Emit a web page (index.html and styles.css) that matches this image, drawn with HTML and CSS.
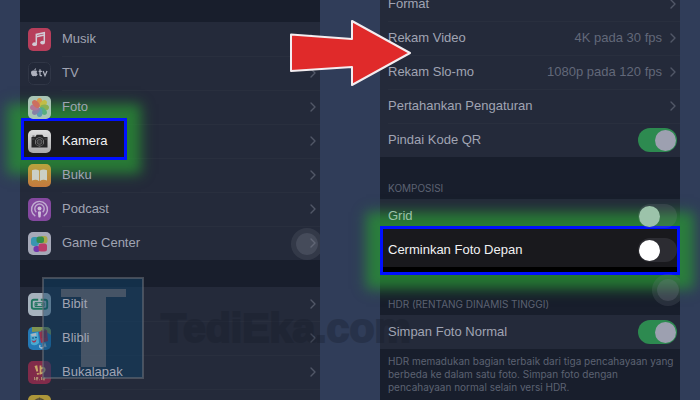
FILE: index.html
```html
<!DOCTYPE html>
<html lang="id">
<head>
<meta charset="utf-8">
<meta name="viewport" content="width=device-width, initial-scale=1">
<title>Cerminkan Foto Depan</title>
<link rel="stylesheet" href="styles.css">
</head>
<body>
<svg class="sprite" aria-hidden="true">
  <symbol id="chevron" viewBox="0 0 6 10"><path d="M1 1l4 4-4 4" fill="none" stroke="currentColor" stroke-width="1.4" stroke-linecap="round" stroke-linejoin="round"/></symbol>
</svg>
<main class="guide">
  <section class="screen" aria-label="Pengaturan">
    <ul class="group group-apps">
      <li class="row"><a class="link" href="#musik">
        <svg class="icon" viewBox="0 0 23 23"><rect width="23" height="23" rx="5" fill="#b73e5b"/><path d="M8.3 15.8V6.400l8-1.700v9.500M8.300 8.800l8-1.700" fill="none" stroke="#d2cbd6" stroke-width="1.500"/><ellipse cx="6.600" cy="16.200" rx="2.400" ry="1.900" fill="#d2cbd6"/><ellipse cx="14.600" cy="14.600" rx="2.400" ry="1.900" fill="#d2cbd6"/></svg>
        <span class="label">Musik</span><svg class="chevron"><use href="#chevron"/></svg></a></li>
      <li class="row"><a class="link" href="#tv">
        <svg class="icon" viewBox="0 0 23 23"><rect x=".5" y=".5" width="22" height="22" rx="5" fill="#222838" stroke="#303646"/><path d="M6.400 8.800c1-.5 2.200-.5 3 .3-1.100.9-1 2.400.3 3-.5 1.500-1.400 2.500-2.300 2.200-.8-.3-1-.3-1.800 0C4.100 14.500 3 12.200 3 10.800c0-1.800 1.600-2.700 3.400-2zM6.300 8.300c0-1.100.8-2 1.800-2.100 0 1.100-.8 2-1.800 2.100z" fill="#aeb1be"/><path d="M12 7.300v5.300q0 1.400 1.900 1M10.600 9.300h3.300M15.100 9.100l1.900 4.600 2-4.600" fill="none" stroke="#aeb1be" stroke-width="1.300"/></svg>
        <span class="label">TV</span><svg class="chevron"><use href="#chevron"/></svg></a></li>
      <li class="row"><a class="link" href="#foto">
        <svg class="icon" viewBox="0 0 23 23"><rect width="23" height="23" rx="5" fill="#a9c5b4"/><g opacity=".9"><ellipse cx="11.500" cy="6.500" rx="2.900" ry="4.500" fill="#dc963f"/><ellipse cx="11.500" cy="6.500" rx="2.900" ry="4.500" fill="#c5bd3c" transform="rotate(45 11.500 11.500)"/><ellipse cx="11.500" cy="6.500" rx="2.900" ry="4.500" fill="#87ad49" transform="rotate(90 11.500 11.500)"/><ellipse cx="11.500" cy="6.500" rx="2.900" ry="4.500" fill="#4fad79" transform="rotate(135 11.500 11.500)"/><ellipse cx="11.500" cy="6.500" rx="2.900" ry="4.500" fill="#5596b4" transform="rotate(180 11.500 11.500)"/><ellipse cx="11.500" cy="6.500" rx="2.900" ry="4.500" fill="#8379a6" transform="rotate(225 11.500 11.500)"/><ellipse cx="11.500" cy="6.500" rx="2.900" ry="4.500" fill="#b26f95" transform="rotate(270 11.500 11.500)"/><ellipse cx="11.500" cy="6.500" rx="2.900" ry="4.500" fill="#d26656" transform="rotate(315 11.500 11.500)"/></g></svg>
        <span class="label">Foto</span><svg class="chevron"><use href="#chevron"/></svg></a></li>
      <li class="row row-marked"><span class="marker marker-camera"></span><a class="link" href="#kamera">
        <svg class="icon" viewBox="0 0 23 23"><defs><linearGradient id="cam" x2="0" y2="1"><stop stop-color="#dededf"/><stop offset="1" stop-color="#aaaaac"/></linearGradient></defs><rect width="23" height="23" rx="5" fill="url(#cam)"/><path d="M3.500 7h3.700l1.500-2.200h5.600L15.800 7h3.700v10.500h-16z" fill="#252527"/><path d="M4.400 5.700h2.200v.8H4.400z" fill="#252527"/><circle cx="11.500" cy="11.900" r="4.500" fill="#a5a5a7"/><circle cx="11.500" cy="11.900" r="3.900" fill="#242426"/><circle cx="11.500" cy="11.900" r="2.500" fill="#3b3b3e" stroke="#777779" stroke-width=".7"/><path d="M3.500 9h3M16.500 9h3" stroke="#666669" stroke-width=".7"/></svg>
        <span class="label">Kamera</span><svg class="chevron"><use href="#chevron"/></svg></a></li>
      <li class="row"><a class="link" href="#buku">
        <svg class="icon" viewBox="0 0 23 23"><defs><linearGradient id="book" x2="0" y2="1"><stop stop-color="#b9a43d"/><stop offset="1" stop-color="#c2793e"/></linearGradient></defs><rect width="23" height="23" rx="5" fill="url(#book)"/><path d="M4 6.200q4-1.700 7.100.4v10.300q-3.100-1.900-7.100-.4zM19 6.200q-4-1.700-7.100.4v10.300q3.100-1.900 7.100-.4z" fill="#cbcfc6"/></svg>
        <span class="label">Buku</span><svg class="chevron"><use href="#chevron"/></svg></a></li>
      <li class="row"><a class="link" href="#podcast">
        <svg class="icon" viewBox="0 0 23 23"><rect width="23" height="23" rx="5" fill="#84489f"/><g fill="none" stroke="#c0acd0" stroke-width="1.400"><path d="M7.300 18.200a8 8 0 1 1 8.400 0M8.300 14.200a4.700 4.700 0 1 1 6.400 0"/></g><circle cx="11.500" cy="10.500" r="2" fill="#d0c0dc"/><path d="M9.900 13.700q1.600-1 3.200 0l-.5 5.300q-1.100 1.200-2.200 0z" fill="#d0c0dc"/></svg>
        <span class="label">Podcast</span><svg class="chevron"><use href="#chevron"/></svg></a></li>
      <li class="row"><a class="link" href="#game-center">
        <svg class="icon" viewBox="0 0 23 23"><rect width="23" height="23" rx="5" fill="#a6a9b8"/><rect x="12" y="4" width="7.500" height="7.500" rx="3" fill="#aba849"/><rect x="3" y="5" width="8" height="9" rx="3" fill="#3996b1"/><rect x="8.500" y="4.500" width="7.500" height="6.500" rx="2.500" fill="#338c4b"/><rect x="5.500" y="14" width="6.500" height="6" rx="2.700" fill="#7437ac"/><rect x="10.500" y="11.500" width="8.500" height="8" rx="2.500" fill="#b93d69"/></svg>
        <span class="label">Game Center</span><svg class="chevron"><use href="#chevron"/></svg></a><span class="touch touch-left"></span></li>
    </ul>
    <ul class="group">
      <li class="row"><a class="link" href="#bibit">
        <svg class="icon" viewBox="0 0 23 23"><rect width="23" height="23" rx="5" fill="#a6b2bd"/><path d="M10.200 6.700H5.800q-2 0-2 2v5q0 2 2 2h11.400q2 0 2-2v-5q0-2-2-2h-4.400" fill="none" stroke="#20755f" stroke-width="1.900"/><path d="M7 9.700h9v3.800H7z" fill="none" stroke="#20755f" stroke-width="1"/><circle cx="8.500" cy="11.500" r="1.200" fill="#20755f"/><circle cx="14.500" cy="11.500" r="1.200" fill="#20755f"/></svg>
        <span class="label">Bibit</span><svg class="chevron"><use href="#chevron"/></svg></a></li>
      <li class="row"><a class="link" href="#blibli">
        <svg class="icon" viewBox="0 0 23 23"><rect width="23" height="23" rx="5" fill="#2478b4"/><path d="M4 0h14q5 0 5 5v3L17 4 4 5z" fill="#7f9250"/><path d="M11 5l8-2 1 11-7 2z" fill="#9a304d"/><path d="M14 3v8M17 2v9" stroke="#653b54"/><path d="M2 7l8-2 1 11q-4 4-8 1z" fill="#4aa9d0"/><path d="M3 7l5-1 .5 3-5 .5z" fill="#a8b4c1"/><path d="M3.500 13q3 2.500 5-1-.5 5-4 3z" fill="#a5344f"/><circle cx="5" cy="11" r=".8" fill="#173b6b"/><circle cx="8" cy="10.500" r=".8" fill="#173b6b"/><path d="M12 18q-1 3 1.500 3t3.500-4l1 3" fill="none" stroke="#a8c3d8" stroke-width="1.300"/></svg>
        <span class="label">Blibli</span><svg class="chevron"><use href="#chevron"/></svg></a></li>
      <li class="row"><a class="link" href="#bukalapak">
        <svg class="icon" viewBox="0 0 23 23"><rect width="23" height="23" rx="5" fill="#812b4a"/><path d="M6.500 5l2.700-.7 1 6-1.700.5zM8.700 12.300l2-.5.300 1.600-1.900.4z" fill="#c9a869"/><path d="M12.500 4.500v8M12.500 8q3.500-2.500 4.200.3.300 3.200-5.200 4.500" fill="none" stroke="#c9a869" stroke-width="1.800"/><path d="M6.500 16v3M8 16.500h2v1H8v1.300h2M11.200 18.800h.8M13.500 16v3M15 16.500h2v1h-2v1.300h2" fill="none" stroke="#b7a279" stroke-width=".8"/></svg>
        <span class="label">Bukalapak</span><svg class="chevron"><use href="#chevron"/></svg></a></li>
      <li class="row"><a class="link" href="#lainnya" aria-label="Aplikasi lainnya">
        <svg class="icon" viewBox="0 0 23 23"><rect width="23" height="23" rx="5" fill="#ad963a"/><path d="M7 5.500q4.500-3.500 9 0M11.500 2.500V6" fill="none" stroke="#554d37" stroke-width="1.400"/></svg></a></li>
    </ul>
  </section>

  <section class="screen screen-camera" aria-label="Kamera">
    <ul class="group group-record">
      <li class="row"><a class="link" href="#format"><span class="label">Format</span><svg class="chevron"><use href="#chevron"/></svg></a></li>
      <li class="row"><a class="link" href="#video"><span class="label">Rekam Video</span><span class="value">4K pada 30 fps</span><svg class="chevron"><use href="#chevron"/></svg></a></li>
      <li class="row"><a class="link" href="#slomo"><span class="label">Rekam Slo-mo</span><span class="value">1080p pada 120 fps</span><svg class="chevron"><use href="#chevron"/></svg></a></li>
      <li class="row"><a class="link" href="#pertahankan"><span class="label">Pertahankan Pengaturan</span><svg class="chevron"><use href="#chevron"/></svg></a></li>
      <li class="row"><div class="link"><label class="label" for="qr">Pindai Kode QR</label><input class="switch" type="checkbox" role="switch" id="qr" checked></div></li>
    </ul>
    <h2 class="heading">KOMPOSISI</h2>
    <ul class="group">
      <li class="row"><div class="link"><label class="label label-grid" for="grid">Grid</label><input class="switch" type="checkbox" role="switch" id="grid"></div></li>
      <li class="row row-marked"><span class="marker marker-mirror"></span><div class="link"><label class="label" for="mirror">Cerminkan Foto Depan</label><input class="switch" type="checkbox" role="switch" id="mirror"></div></li>
    </ul>
    <div class="heading-line"><h2 class="heading heading-hdr">HDR (RENTANG DINAMIS TINGGI)</h2><span class="touch touch-right"></span></div>
    <ul class="group">
      <li class="row"><div class="link"><label class="label" for="hdr">Simpan Foto Normal</label><input class="switch" type="checkbox" role="switch" id="hdr" checked></div></li>
    </ul>
    <p class="note">HDR memadukan bagian terbaik dari tiga pencahayaan yang berbeda ke dalam satu foto. Simpan foto dengan pencahayaan normal selain versi HDR.</p>
  </section>

  <div class="watermark" aria-hidden="true">
    <svg class="badge" viewBox="0 0 102 102"><rect x="1" y="1" width="100" height="100" fill="#0d4066" fill-opacity=".5" stroke="#6b7078" stroke-opacity=".55" stroke-width="2"/><path d="M19 12h65v8H64v70H39V20H19z" fill="#777780" fill-opacity=".48"/></svg>
    <span class="brand">TediEka.com</span>
  </div>
  <svg class="arrow" viewBox="0 0 122 68" aria-hidden="true"><path d="M2 15.500L63 20V2l58 32-58 32V48L2 52z" fill="#e02a2a" stroke="#f3edf0" stroke-width="2" stroke-linejoin="round"/></svg>
</main>
</body>
</html>
```
FILE: styles.css
```css
* { box-sizing: border-box; }

body {
  margin: 0;
  background: #303d59;
  color: #a0a4b3;
  font: 13px/16px "Liberation Sans", Arial, sans-serif;
}

.sprite { position: absolute; width: 0; height: 0; }

.guide {
  position: relative;
  display: grid;
  grid-template-columns: 1fr 1fr;
  gap: 60px;
  height: 100vh;
  padding: 0 20px;
  overflow: hidden;
}

.screen { background: #181e2c; }

.group {
  margin: 0;
  padding: 0;
  list-style: none;
  background: #242a3a;
}

.group-apps { margin: 22px 0 27px; }
.group-record { margin-top: -13px; }

.row { position: relative; height: 34px; }

.row + .row::before {
  content: "";
  position: absolute;
  top: 0;
  right: 0;
  left: 42px;
  height: 1px;
  background: #292f3e;
}

.screen-camera .row + .row::before { left: 8px; }

.link {
  display: flex;
  align-items: center;
  height: 100%;
  padding: 0 4px 0 8px;
  color: inherit;
  text-decoration: none;
}

/* Stacking: marker glow, icons and controls, watermark, labels, arrow. */
.icon, .chevron, .switch, .value { position: relative; z-index: 2; }
.label { position: relative; z-index: 3; }

.icon { width: 23px; height: 23px; margin-right: 11px; }
.label { flex: 1; }
.value { color: #626879; }

.chevron {
  width: 6px;
  height: 10px;
  margin-left: 8px;
  color: #515767;
}

.row-marked .label { color: #f1f1f3; }
.label-grid { color: #9cc3aa; }

.marker {
  position: absolute;
  z-index: 1;
  border: 3px solid #0010ff;
  background: #19191d;
  box-shadow: 0 0 12px 14px rgba(41, 145, 52, .78);
}

.marker-camera { top: -6px; bottom: -2px; left: 1px; width: 106px; }

.marker-mirror {
  top: -7px;
  right: 0;
  bottom: -8px;
  left: 0;
  background: linear-gradient(#19191d 38px, #000 38px);
}

.switch {
  appearance: none;
  display: flex;
  align-items: center;
  width: 39px;
  height: 24px;
  margin: 0 -1px 0 0;
  padding: 1px;
  border-radius: 12px;
  background: rgba(150, 150, 160, .16);
}

.switch::before {
  content: "";
  width: 21px;
  height: 21px;
  border-radius: 50%;
  background: #9da0b0;
}

.switch:checked { justify-content: flex-end; background: #2d8a50; }
#grid::before { background: #9cc3aa; }
#mirror::before { background: #fff; }

.heading,
.note {
  margin: 0;
  color: #5c6272;
  font-family: Inter, "Liberation Sans", sans-serif;
  font-size: 10px;
  font-weight: 400;
}

.heading { padding: 25px 8px 5px; line-height: 12px; }
.heading-hdr { position: relative; z-index: 2; padding-top: 31px; }
.heading-line { position: relative; }
.note { padding: 6px 0 6px 8px; line-height: 13px; }

.touch {
  position: absolute;
  z-index: 3;
  width: 32px;
  height: 32px;
  border: 5px solid rgba(120, 125, 140, .18);
  border-radius: 50%;
  background: rgba(120, 125, 140, .4);
  background-clip: padding-box;
}

.touch-left { top: 2px; right: -3px; clip-path: inset(0 3px 0 0); }
.touch-right { top: 7px; right: -4px; clip-path: inset(0 4px 0 0); }

.watermark {
  position: absolute;
  z-index: 2;
  top: 277px;
  left: 42px;
  display: flex;
  align-items: center;
  gap: 17px;
  pointer-events: none;
}

.badge { width: 102px; height: 102px; }

.brand {
  color: #141a28;
  opacity: .3;
  font: 700 41px/52px Impact, "Liberation Sans Narrow", "Liberation Sans", sans-serif;
  -webkit-text-stroke: 2px #141a28;
}

.arrow {
  position: absolute;
  z-index: 4;
  top: 19px;
  left: 289px;
  width: 122px;
  height: 68px;
}
```
